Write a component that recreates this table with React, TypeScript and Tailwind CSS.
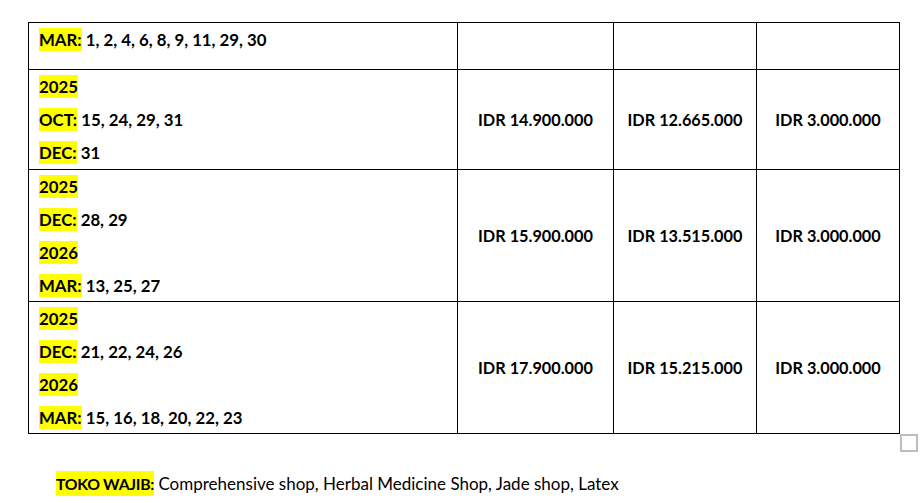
import React from 'react';

type Line = { label?: string; text?: string };

const rows: { lines: Line[]; prices: string[]; height: string }[] = [
  {
    lines: [{ label: 'MAR:', text: ' 1, 2, 4, 6, 8, 9, 11, 29, 30' }],
    prices: ['', '', ''],
    height: 'h-[47px]',
  },
  {
    lines: [{ label: '2025' }, { label: 'OCT:', text: ' 15, 24, 29, 31' }, { label: 'DEC:', text: ' 31' }],
    prices: ['IDR 14.900.000', 'IDR 12.665.000', 'IDR 3.000.000'],
    height: 'h-[100px]',
  },
  {
    lines: [{ label: '2025' }, { label: 'DEC:', text: ' 28, 29' }, { label: '2026' }, { label: 'MAR:', text: ' 13, 25, 27' }],
    prices: ['IDR 15.900.000', 'IDR 13.515.000', 'IDR 3.000.000'],
    height: 'h-[132px]',
  },
  {
    lines: [
      { label: '2025' },
      { label: 'DEC:', text: ' 21, 22, 24, 26' },
      { label: '2026' },
      { label: 'MAR:', text: ' 15, 16, 18, 20, 22, 23' },
    ],
    prices: ['IDR 17.900.000', 'IDR 15.215.000', 'IDR 3.000.000'],
    height: 'h-[132px]',
  },
];

export default function App() {
  return (
    <div className="relative w-[922px] h-[503px] bg-white overflow-hidden text-black font-['Lato',sans-serif]">
      {/* Schedule table */}
      <div className="ml-[28px] mt-[22px] w-[872px] border-r border-b border-black grid grid-cols-[429px_156px_143px_143px]">
        {rows.map((row, i) => (
          <React.Fragment key={i}>
            <div className={`${row.height} border-l border-t border-black pl-[10px] pt-[6px] flex flex-col gap-[11px]`}>
              {row.lines.map((l, j) => (
                <p key={j} className="text-[16.8px] leading-[22px] font-bold">
                  <span className="bg-[#ffff00] py-[1px]">{l.label}</span>
                  {l.text}
                </p>
              ))}
            </div>
            {row.prices.map((p, k) => (
              <div
                key={k}
                className={`${row.height} border-l border-t border-black flex items-center justify-center pt-[2px] text-[16.3px] font-bold`}
              >
                {p}
              </div>
            ))}
          </React.Fragment>
        ))}
      </div>

      {/* Table resize handle */}
      <div className="absolute left-[900px] top-[434px] w-[18px] h-[18px] border-2 border-[#bdbdbd] bg-white" />

      <p className="mt-[39px] pl-[56px] text-[17px] leading-[22px]">
        <span className="bg-[#ffff00] font-bold text-[15.8px] tracking-[-0.3px] py-[3px]">TOKO WAJIB:</span> Comprehensive shop, Herbal Medicine Shop, Jade shop, Latex
      </p>
    </div>
  );
}
